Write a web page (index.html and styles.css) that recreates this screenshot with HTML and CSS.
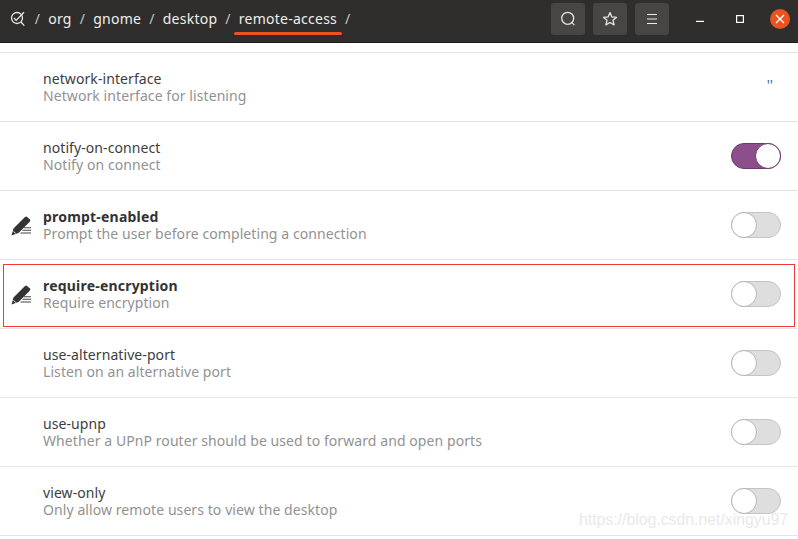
FILE: index.html
```html
<!DOCTYPE html>
<html lang="en">
<head>
<meta charset="utf-8">
<title>remote-access</title>
<link rel="stylesheet" href="styles.css">
</head>
<body>
<header class="bar">
  <nav class="path">
    <svg class="root-icon" width="18" height="18" viewBox="0 0 18 18" fill="none" stroke="#e8e8e8" stroke-width="1.3">
      <circle cx="8" cy="8" r="5.5"/>
      <path d="M5 8l2.2 2.4L15 2.2M12 12l3.300 3.600"/>
    </svg>
    <span class="sep">/</span><span class="seg">org</span>
    <span class="sep">/</span><span class="seg">gnome</span>
    <span class="sep">/</span><span class="seg">desktop</span>
    <span class="sep">/</span><span class="seg current">remote-access</span>
    <span class="sep">/</span>
  </nav>
  <div class="tools">
    <button class="tool" aria-label="Search">
      <svg width="18" height="18" viewBox="0 0 18 18" fill="none" stroke="#e4e4e4" stroke-width="1.3"><circle cx="8.700" cy="8.300" r="6"/><path d="M13 12.600l2.400 2.500"/></svg>
    </button>
    <button class="tool" aria-label="Bookmarks">
      <svg width="16" height="16" viewBox="0 0 16 16" fill="none" stroke="#e4e4e4" stroke-width="1.3" stroke-linejoin="round"><path d="M8 1.600l1.900 4.300 4.700.4-3.600 3 1.100 4.600L8 11.500l-4.100 2.400L5 9.300l-3.600-3 4.700-.4z"/></svg>
    </button>
    <button class="tool" aria-label="Menu">
      <svg width="12" height="12" viewBox="0 0 12 12" stroke="#e8e8e8" stroke-width="1"><path d="M1 1.500h10M1 6h10M1 10.500h10"/></svg>
    </button>
  </div>
  <div class="window">
    <span class="win-btn"><svg width="10" height="10" viewBox="0 0 10 10" stroke="#fff" stroke-width="1.200"><path d="M1 7.400h8"/></svg></span>
    <span class="win-btn"><svg width="10" height="10" viewBox="0 0 10 10" fill="none" stroke="#fff" stroke-width="1.200"><rect x="1.600" y="1.600" width="6.800" height="6.800"/></svg></span>
    <span class="win-btn close"><svg width="10" height="10" viewBox="0 0 10 10" stroke="#fff" stroke-width="1.300"><path d="M1 1l8 8M9 1l-8 8"/></svg></span>
  </div>
</header>

<main class="list">
  <section class="row">
    <span class="slot"></span>
    <div class="text"><div class="name">network-interface</div><div class="desc">Network interface for listening</div></div>
    <span class="value">''</span>
  </section>
  <section class="row">
    <span class="slot"></span>
    <div class="text"><div class="name">notify-on-connect</div><div class="desc">Notify on connect</div></div>
    <span class="switch on"><span class="knob"></span></span>
  </section>
  <section class="row">
    <span class="slot"><svg class="pen" width="22" height="20" viewBox="0 0 22 20"><path d="M.5 19.500l2-7L14 1l1.500-.5 4 3.500-1 2L7.500 17z" fill="#333"/><path d="M2.600 15.400l2.200 2.200" stroke="#fff" stroke-width="1"/><path d="M13 11.700h7M11.500 14.300h8.500M9.500 17h10.500" stroke="#444" stroke-width="1.100"/></svg></span>
    <div class="text"><div class="name modified">prompt-enabled</div><div class="desc">Prompt the user before completing a connection</div></div>
    <span class="switch"><span class="knob"></span></span>
  </section>
  <section class="row">
    <span class="slot"><svg class="pen" width="22" height="20" viewBox="0 0 22 20"><path d="M.5 19.500l2-7L14 1l1.500-.5 4 3.500-1 2L7.500 17z" fill="#333"/><path d="M2.600 15.400l2.200 2.200" stroke="#fff" stroke-width="1"/><path d="M13 11.700h7M11.500 14.300h8.500M9.500 17h10.500" stroke="#444" stroke-width="1.100"/></svg></span>
    <div class="text"><div class="name modified">require-encryption</div><div class="desc">Require encryption</div></div>
    <span class="switch"><span class="knob"></span></span>
    <span class="highlight"></span>
  </section>
  <section class="row">
    <span class="slot"></span>
    <div class="text"><div class="name">use-alternative-port</div><div class="desc">Listen on an alternative port</div></div>
    <span class="switch"><span class="knob"></span></span>
  </section>
  <section class="row">
    <span class="slot"></span>
    <div class="text"><div class="name">use-upnp</div><div class="desc">Whether a UPnP router should be used to forward and open ports</div></div>
    <span class="switch"><span class="knob"></span></span>
  </section>
  <section class="row">
    <span class="slot"></span>
    <div class="text"><div class="name">view-only</div><div class="desc">Only allow remote users to view the desktop</div></div>
    <span class="switch"><span class="knob"></span></span>
  </section>
</main>
<div class="watermark">https://blog.csdn.net/xingyu97</div>
</body>
</html>
```

FILE: styles.css
```css
* { box-sizing: border-box; }
html, body { margin: 0; height: 100%; overflow: hidden; }
body {
  background: #fff;
  font-family: "Noto Sans", "Open Sans", sans-serif;
  font-size: 14px;
  position: relative;
}
.bar {
  height: 43px;
  padding-bottom: 4px;
  background: #2f2e2d;
  border-bottom: 1px solid #1f1e1e;
  display: flex;
  align-items: center;
  color: #eeeeee;
}
.path {
  display: flex;
  align-items: center;
  flex: 1;
  padding-left: 9px;
  height: 100%;
  font-size: 14px;
  line-height: 20px;
  letter-spacing: .25px;
}
.root-icon { margin-right: 7px; }
.sep { color: #c4c4c4; margin-right: 7.250px; width: 7px; text-align: center; }
.seg { margin-right: 7.250px; white-space: nowrap; }
.current { position: relative; }
.current::after {
  content: "";
  position: absolute;
  left: -5px;
  right: -5px;
  top: 23px;
  height: 3px;
  border-radius: 2px;
  background: #e95420;
}
.tools { display: flex; gap: 8px; margin-right: 18px; }
.tool {
  width: 34px;
  height: 32px;
  padding: 0;
  border: 0;
  border-radius: 3px;
  background: #484645;
  display: flex;
  align-items: center;
  justify-content: center;
}
.window { display: flex; align-items: center; gap: 15px; margin-right: 8px; }
.win-btn {
  width: 25px;
  height: 20px;
  display: flex;
  align-items: center;
  justify-content: center;
}
.win-btn.close {
  width: 20px;
  height: 20px;
  margin-left: 3px;
  border-radius: 50%;
  background: #e95420;
}
.list {
  margin-top: 9px;
  border-top: 1px solid #e4e4e4;
}
.row {
  height: 69px;
  border-bottom: 1px solid #e4e4e4;
  display: flex;
  align-items: center;
  position: relative;
  padding-right: 17px;
}
.slot { width: 43px; flex: none; display: flex; padding-left: 11px; padding-top: 1px; }
.text { flex: 1; line-height: 17px; letter-spacing: .08px; }
.name { color: #3d3d3d; font-size: 14px; }
.name.modified { font-weight: 700; color: #333; letter-spacing: .2px; }
.desc { color: #929292; font-size: 14px; }
.value { color: #2a6f9e; font-size: 14px; margin-right: 8px; margin-bottom: 6px; }
.switch {
  width: 50px;
  height: 26px;
  border-radius: 13px;
  background: #dedede;
  border: 1px solid #c4c4c4;
  position: relative;
  flex: none;
}
.switch.on { background: #8c4f8c; border-color: #6a3a6a; }
.knob {
  position: absolute;
  left: -1px;
  top: -1px;
  width: 26px;
  height: 26px;
  border-radius: 50%;
  background: #fff;
  border: 1px solid #b6b6b6;
}
.switch.on .knob { left: auto; right: -1px; border-color: #6a3a6a; }
.highlight {
  position: absolute;
  left: 3px;
  right: 3px;
  top: 4px;
  height: 63px;
  border: 1px solid #ee3a3a;
  pointer-events: none;
}
.watermark {
  position: absolute;
  left: 579px;
  top: 511px;
  font-family: "Liberation Sans", sans-serif;
  font-size: 15.800px;
  color: #e9e9e9;
  white-space: nowrap;
}
```
